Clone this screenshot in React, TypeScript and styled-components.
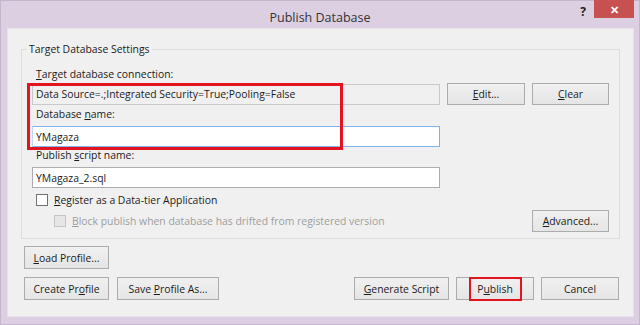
import styled, { createGlobalStyle } from 'styled-components';

const GlobalStyle = createGlobalStyle`
    body {
        margin: 0;
        font-family: "Open Sans", "Noto Sans", sans-serif;
    }
`;

const Window = styled.div`
    width: 640px;
    height: 325px;
    box-sizing: border-box;
    background: #ddcfe2;
    border: 1px solid #c6b5ce;
    display: flex;
    flex-direction: column;
    font-size: 10.4px;
    color: #1b1b1b;
`;

const TitleBar = styled.div`
    height: 27px;
    display: grid;
    grid-template-columns: 1fr auto 1fr;
`;

const Title = styled.div`
    font-size: 12.5px;
    color: #333;
    padding-top: 8px;
`;

const Controls = styled.div`
    display: flex;
    justify-content: flex-end;
    align-items: flex-start;
    padding-right: 5px;
`;

const HelpMark = styled.div`
    font-weight: bold;
    font-size: 12px;
    color: #222;
    margin: 2px 8px 0 0;
`;

const CloseButton = styled.div`
    width: 40px;
    height: 18px;
    margin-top: -1px;
    background: #c75050;
    color: #fff;
    font-size: 11px;
    font-weight: bold;
    display: flex;
    align-items: center;
    justify-content: center;
`;

const Body = styled.div`
    flex: 1;
    margin: 0 5px 7px 6px;
    background: #f0f0f0;
    border: 1px solid #e6e0e9;
    display: flex;
    flex-direction: column;
    padding: 20px 13px 15px 13px;
`;

const GroupBox = styled.div`
    position: relative;
    border: 1px solid #dcdcdc;
    display: flex;
    flex-direction: column;
    padding: 0 10px 6px 10px;
`;

const GroupTitle = styled.div`
    align-self: flex-start;
    margin: -8px 0 0 -5px;
    padding: 0 2px;
    line-height: 15px;
    background: #f0f0f0;
`;

const Label = styled.div<{ top: number }>`
    margin-top: ${(p) => p.top}px;
    line-height: 15px;
    padding-left: 4px;
`;

const Row = styled.div<{ top: number }>`
    margin-top: ${(p) => p.top}px;
    display: flex;
    align-items: center;
    gap: 7px;
`;

const Field = styled.div<{ readOnly?: boolean; focused?: boolean }>`
    width: 408px;
    height: 21px;
    box-sizing: border-box;
    display: flex;
    align-items: center;
    padding-left: 3px;
    background: ${(p) => (p.readOnly ? '#f0f0f0' : '#ffffff')};
    border: 1px solid ${(p) => (p.focused ? '#7eb4ea' : p.readOnly ? '#c9c9c9' : '#abadb3')};
    ${(p) => (p.focused ? 'border-left-color: #c0d8f0;' : '')}
`;

const Button = styled.div<{ w: number; h?: number }>`
    position: relative;
    width: ${(p) => p.w}px;
    height: ${(p) => p.h ?? 22}px;
    box-sizing: border-box;
    border: 1px solid #acacac;
    background: linear-gradient(#f0f0f0, #e5e5e5);
    display: flex;
    align-items: center;
    justify-content: center;
    flex-shrink: 0;
`;

const CheckRow = styled.div<{ top: number; indent: number }>`
    margin-top: ${(p) => p.top}px;
    padding-left: ${(p) => p.indent}px;
    display: flex;
    align-items: center;
    gap: 6px;
`;

const Check = styled.div<{ disabled?: boolean }>`
    width: 12px;
    height: 12px;
    box-sizing: border-box;
    border: 1px solid ${(p) => (p.disabled ? '#c4c4c4' : '#707070')};
    background: ${(p) => (p.disabled ? '#e6e6e6' : '#ffffff')};
`;

const CheckText = styled.span<{ disabled?: boolean }>`
    color: ${(p) => (p.disabled ? '#9e9e9e' : 'inherit')};
`;

const SplitRow = styled.div<{ top: number }>`
    margin-top: ${(p) => p.top}px;
    display: flex;
    align-items: center;
    justify-content: space-between;
`;

const Footer = styled.div<{ top: number }>`
    margin-top: ${(p) => p.top}px;
    padding-left: 3px;
    padding-right: 1px;
    display: flex;
    align-items: center;
    justify-content: space-between;
`;

const ButtonGroup = styled.div<{ gap: number }>`
    display: flex;
    gap: ${(p) => p.gap}px;
`;

const Highlight = styled.div`
    position: absolute;
    box-sizing: border-box;
    border: 3px solid #e3141f;
    pointer-events: none;
`;

const ConnectionHighlight = styled(Highlight)`
    left: 5px;
    top: 33px;
    width: 316px;
    height: 67px;
`;

const PublishHighlight = styled(Highlight)`
    left: 12px;
    top: -1px;
    width: 53px;
    height: 24px;
    border-width: 2px;
`;

const U = styled.span`
    text-decoration: underline;
`;

export default function App() {
    return (
        <>
            <GlobalStyle />
            <Window>
                <TitleBar>
                    <div />
                    <Title>Publish Database</Title>
                    <Controls>
                        <HelpMark>?</HelpMark>
                        <CloseButton>✕</CloseButton>
                    </Controls>
                </TitleBar>
                <Body>
                    <GroupBox>
                        <GroupTitle>Target Database Settings</GroupTitle>
                        <Label top={10}><U>T</U>arget database connection:</Label>
                        <Row top={1}>
                            <Field readOnly>Data Source=.;Integrated Security=True;Pooling=False</Field>
                            <Button w={78}><span><U>E</U>dit...</span></Button>
                            <Button w={77}><span><U>C</U>lear</span></Button>
                        </Row>
                        <Label top={2}>Database <U>n</U>ame:</Label>
                        <Row top={4}>
                            <Field focused>YMagaza</Field>
                        </Row>
                        <Label top={1}>Publish <U>s</U>cript name:</Label>
                        <Row top={4}>
                            <Field>YMagaza_2.sql</Field>
                        </Row>
                        <CheckRow top={5} indent={4}>
                            <Check />
                            <span><U>R</U>egister as a Data-tier Application</span>
                        </CheckRow>
                        <SplitRow top={3}>
                            <CheckRow top={0} indent={22}>
                                <Check disabled />
                                <CheckText disabled><U>B</U>lock publish when database has drifted from registered version</CheckText>
                            </CheckRow>
                            <Button w={77}><span><U>A</U>dvanced...</span></Button>
                        </SplitRow>
                        <ConnectionHighlight />
                    </GroupBox>
                    <Footer top={7}>
                        <Button w={85} h={23}><span><U>L</U>oad Profile...</span></Button>
                    </Footer>
                    <Footer top={8}>
                        <ButtonGroup gap={8}>
                            <Button w={85} h={23}><span>Create Pr<U>o</U>file</span></Button>
                            <Button w={102} h={23}><span>Save <U>P</U>rofile As...</span></Button>
                        </ButtonGroup>
                        <ButtonGroup gap={7}>
                            <Button w={95} h={23}><span><U>G</U>enerate Script</span></Button>
                            <Button w={78} h={23}>
                                <span>P<U>u</U>blish</span>
                                <PublishHighlight />
                            </Button>
                            <Button w={78} h={23}>Cancel</Button>
                        </ButtonGroup>
                    </Footer>
                </Body>
            </Window>
        </>
    );
}
